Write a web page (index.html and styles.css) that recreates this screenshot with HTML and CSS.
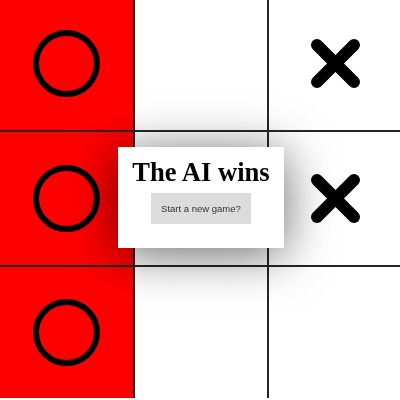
FILE: index.html
```html
<!DOCTYPE html>
<html>
<head>
<meta charset="utf-8">
<title>Tic Tac Toe</title>
<link rel="stylesheet" href="styles.css">
</head>
<body>
<div class="board">
  <div class="cell win"><svg class="o" viewBox="0 0 67 67"><circle cx="33.5" cy="33.5" r="30.5"/></svg></div>
  <div class="cell"></div>
  <div class="cell"><svg class="x" viewBox="0 0 49 49"><line x1="6" y1="6" x2="43" y2="43"/><line x1="43" y1="6" x2="6" y2="43"/></svg></div>
  <div class="cell win"><svg class="o" viewBox="0 0 67 67"><circle cx="33.5" cy="33.5" r="30.5"/></svg></div>
  <div class="cell"></div>
  <div class="cell"><svg class="x" viewBox="0 0 49 49"><line x1="6" y1="6" x2="43" y2="43"/><line x1="43" y1="6" x2="6" y2="43"/></svg></div>
  <div class="cell win last-row"><svg class="o" viewBox="0 0 67 67"><circle cx="33.5" cy="33.5" r="30.5"/></svg></div>
  <div class="cell last-row"></div>
  <div class="cell last-row"></div>
</div>
<div class="overlay">
  <div class="modal">
    <h1 class="title">The AI wins</h1>
    <button class="restart">Start a new game?</button>
  </div>
</div>
</body>
</html>
```
FILE: styles.css
```css
html, body {
  margin: 0;
  padding: 0;
  background: #fff;
  overflow: hidden;
  width: 400px;
  height: 400px;
}

.board {
  display: grid;
  grid-template-columns: 135px 134px 134px;
  grid-template-rows: 135px 135px 131px;
  margin-top: -3px;
}

.cell {
  box-sizing: border-box;
  border-right: 2px solid #262626;
  border-bottom: 2px solid #262626;
  background: #fff;
  display: flex;
  align-items: center;
  justify-content: center;
}

.cell.last-row {
  border-bottom: none;
}

.cell.win {
  background: #ff0000;
}

.o {
  width: 67px;
  height: 67px;
}

.o circle {
  fill: none;
  stroke: #000;
  stroke-width: 6;
}

.x {
  width: 49px;
  height: 49px;
}

.x line {
  stroke: #000;
  stroke-width: 12;
  stroke-linecap: round;
}

.overlay {
  position: fixed;
  left: 0;
  top: 0;
  width: 400px;
  height: 400px;
  box-sizing: border-box;
  padding: 0 0 6px 2px;
  display: flex;
  align-items: center;
  justify-content: center;
}

.modal {
  background: #fff;
  padding: 10px 14px 24px;
  display: flex;
  flex-direction: column;
  align-items: center;
  box-shadow: 0 6px 50px rgba(0, 0, 0, 0.6);
}

.title {
  margin: 0 0 6px;
  font-family: "Liberation Serif", "Times New Roman", serif;
  font-weight: bold;
  font-size: 26.6px;
  line-height: 30px;
  color: #000;
  white-space: nowrap;
}

.restart {
  border: none;
  background: #dcdcdc;
  color: #333;
  font-family: "Liberation Sans", Arial, sans-serif;
  font-size: 9.5px;
  line-height: 11px;
  padding: 10px;
  margin: 0;
}
```
